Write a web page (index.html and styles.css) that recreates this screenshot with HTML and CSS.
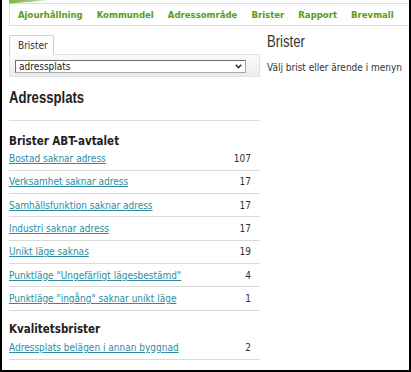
FILE: index.html
```html
<!DOCTYPE html>
<html lang="sv">
<head>
<meta charset="utf-8">
<title>Brister</title>
<link rel="stylesheet" href="styles.css">
</head>
<body>
<div class="frame">
  <header class="header">
    <svg class="swoosh" width="44" height="4" viewBox="0 0 44 4" aria-hidden="true">
      <defs>
        <linearGradient id="sw" x1="0" y1="0" x2="1" y2="0">
          <stop offset="0" stop-color="#7db443"/>
          <stop offset="0.6" stop-color="#a8cf7e"/>
          <stop offset="1" stop-color="#ffffff" stop-opacity="0"/>
        </linearGradient>
      </defs>
      <polygon points="0,0 44,0 0,3.5" fill="url(#sw)"/>
    </svg>
    <nav class="nav">
      <a class="nav-item">Ajourhållning</a>
      <a class="nav-item">Kommundel</a>
      <a class="nav-item">Adressområde</a>
      <a class="nav-item">Brister</a>
      <a class="nav-item">Rapport</a>
      <a class="nav-item">Brevmall</a>
    </nav>
  </header>
  <main class="main">
    <section class="left">
      <div class="tabs">
        <div class="tab">Brister</div>
      </div>
      <div class="panel">
        <div class="select-wrap">
          <select class="select"><option>adressplats</option></select>
          <svg class="chev" width="7" height="5" viewBox="0 0 7 5" aria-hidden="true">
            <polyline points="0.8,0.8 3.5,3.6 6.2,0.8" fill="none" stroke="#333" stroke-width="1.5"/>
          </svg>
        </div>
      </div>
      <h2 class="title"><span class="narrow">Adressplats</span></h2>
      <hr class="rule">
      <h3 class="group">Brister ABT-avtalet</h3>
      <ul class="list">
        <li class="row"><a class="link">Bostad saknar adress</a><span class="num">107</span></li>
        <li class="row"><a class="link">Verksamhet saknar adress</a><span class="num">17</span></li>
        <li class="row"><a class="link">Samhällsfunktion saknar adress</a><span class="num">17</span></li>
        <li class="row"><a class="link">Industri saknar adress</a><span class="num">17</span></li>
        <li class="row"><a class="link">Unikt läge saknas</a><span class="num">19</span></li>
        <li class="row"><a class="link">Punktläge "Ungefärligt lägesbestämd"</a><span class="num">4</span></li>
        <li class="row"><a class="link">Punktläge "ingång" saknar unikt läge</a><span class="num">1</span></li>
      </ul>
      <h3 class="group group-2">Kvalitetsbrister</h3>
      <ul class="list">
        <li class="row"><a class="link">Adressplats belägen i annan byggnad</a><span class="num">2</span></li>
      </ul>
    </section>
    <section class="right">
      <h1 class="heading"><span class="narrow">Brister</span></h1>
      <p class="hint">Välj brist eller ärende i menyn</p>
    </section>
  </main>
</div>
</body>
</html>
```

FILE: styles.css
```css
* { box-sizing: border-box; }
html, body { margin: 0; padding: 0; background: #fff; }
body {
  font-family: "DejaVu Sans Condensed", "DejaVu Sans", sans-serif;
  font-stretch: condensed;
  color: #333;
  font-size: 10px;
}
.frame {
  width: 411px;
  height: 372px;
  border-left: 2px solid #000;
  border-right: 2px solid #000;
  border-bottom: 2px solid #000;
  overflow: hidden;
  display: flex;
  flex-direction: column;
}
.header {
  position: relative;
  padding-top: 3px;
  padding-left: 7px;
}
.swoosh {
  position: absolute;
  left: 7px;
  top: 0;
}
.nav {
  height: 23px;
  border: 1px solid #dedede;
  border-right: none;
  display: flex;
  align-items: center;
  padding-left: 8px;
  gap: 14px;
  white-space: nowrap;
}
.nav-item {
  font-weight: bold;
  font-size: 9.5px;
  color: #5a9c16;
  text-decoration: none;
}
.main {
  display: flex;
  padding-left: 7px;
}
.left {
  width: 251px;
  flex: none;
  padding-top: 9px;
}
.tabs { display: flex; }
.tab {
  width: 45px;
  height: 20px;
  border: 1px solid #cfcfcf;
  border-bottom: none;
  border-radius: 2px 2px 0 0;
  background: #fff;
  padding-left: 8px;
  line-height: 19px;
  font-size: 10px;
  color: #333;
  margin-bottom: -1px;
  position: relative;
}
.panel {
  height: 23px;
  border: 1px solid #e2e2e2;
  background: linear-gradient(#fbfbfb, #ececec);
  padding: 5px 13px 0 5px;
}
.select-wrap {
  position: relative;
  height: 13px;
}
.select {
  appearance: none;
  -webkit-appearance: none;
  width: 100%;
  height: 13px;
  margin: 0;
  padding: 0 0 0 3px;
  border: 1px solid #a8a8a8;
  border-top-color: #6f6f6f;
  border-left-color: #6f6f6f;
  border-radius: 0;
  background: #fff;
  font-family: "DejaVu Sans Condensed", "DejaVu Sans", sans-serif;
  font-size: 10px;
  line-height: 11px;
  color: #222;
}
.chev {
  position: absolute;
  right: 4px;
  top: 4px;
}
.narrow {
  display: inline-block;
  transform: scaleX(0.82);
  transform-origin: left center;
}
.title {
  margin: 11px 0 0;
  font-family: "Liberation Sans", sans-serif;
  font-size: 16px;
  line-height: 20px;
  font-weight: bold;
  color: #222;
}
.rule {
  margin: 12px 0 0;
  border: none;
  border-top: 1px solid #dcdcdc;
  height: 0;
}
.group {
  margin: 12.5px 0 0;
  font-size: 11.5px;
  line-height: 14px;
  font-weight: bold;
  color: #222;
}
.group-2 { margin-top: 11.5px; }
.list {
  list-style: none;
  margin: 0;
  padding: 0;
}
.row {
  height: 23.33px;
  border-bottom: 1px solid #dadada;
  display: flex;
  align-items: center;
  justify-content: space-between;
  padding-right: 9px;
}
.link {
  color: #2b8da3;
  text-decoration: underline;
  font-size: 10px;
}
.num {
  font-size: 10px;
  color: #333;
}
.right {
  padding-left: 7px;
  padding-top: 7px;
  flex: 1;
  min-width: 0;
  white-space: nowrap;
}
.heading {
  margin: 0;
  font-family: "Liberation Sans", sans-serif;
  font-size: 16px;
  line-height: 18px;
  font-weight: normal;
  color: #333;
}
.hint {
  margin: 10px 0 0;
  font-size: 10px;
  line-height: 14px;
  color: #333;
}
```
